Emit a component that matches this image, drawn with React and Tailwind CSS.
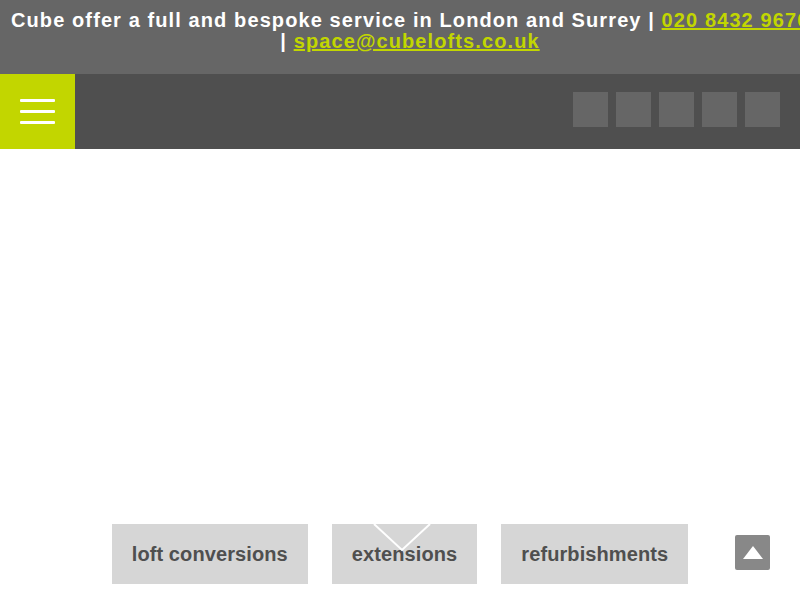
import React from "react";

const font = { fontFamily: '"Liberation Sans", Arial, sans-serif' };

function TopBar() {
  return (
    <div className="h-[74px] w-full overflow-hidden bg-[#666666]">
      <div className="w-[820px] pt-[10px] text-[20px] leading-[21px] font-bold text-white tracking-[1.1px]">
        <div className="whitespace-nowrap pl-[11px]">
          Cube offer a full and bespoke service in London and Surrey |{" "}
          <a href="#" className="text-[#c2d600] underline">020 8432 9670</a>
        </div>
        <div className="text-center whitespace-nowrap">
          | <a href="#" className="text-[#c2d600] underline">space@cubelofts.co.uk</a>
        </div>
      </div>
    </div>
  );
}

function NavBar() {
  return (
    <div className="flex h-[75px] w-full justify-between bg-[#4f4f4f]">
      <button className="flex h-[75px] w-[75px] flex-col items-center justify-center gap-[8px] bg-[#c2d600]">
        {[0, 1, 2].map((i) => (
          <span key={i} className="block h-[3px] w-[35px] rounded-[1px] bg-white" />
        ))}
      </button>
      <div className="flex gap-[8px] pt-[18px] pr-[20px]">
        {[0, 1, 2, 3, 4].map((i) => (
          <a key={i} href="#" className="block h-[35px] w-[35px] bg-[#666666]" />
        ))}
      </div>
    </div>
  );
}

function Services() {
  const items = ["loft conversions", "extensions", "refurbishments"];
  return (
    <div className="relative flex justify-center gap-6 pt-[375px]">
      {items.map((item) => (
        <a
          key={item}
          href="#"
          className="relative flex h-[60px] items-center bg-[#d6d6d6] px-[20px] text-[20px] font-bold tracking-[0.1px] text-[#4f4f4f]"
        >
          {item}
          {item === "extensions" && (
            <svg className="absolute left-[41px] top-0" width="58" height="28" viewBox="0 0 58 28">
              <polyline points="1,0 29,26 57,0" fill="none" stroke="#ffffff" strokeWidth="2" />
            </svg>
          )}
        </a>
      ))}
      <button className="absolute right-[30px] top-[386px] flex h-[35px] w-[35px] items-center justify-center rounded-[2px] bg-[#888888]">
        <svg width="20" height="14" viewBox="0 0 20 14">
          <polygon points="10,0 20,13 0,13" fill="#ffffff" />
        </svg>
      </button>
    </div>
  );
}

export default function App() {
  return (
    <div className="h-[600px] w-[800px] overflow-hidden bg-white" style={font}>
      <TopBar />
      <NavBar />
      <Services />
    </div>
  );
}
